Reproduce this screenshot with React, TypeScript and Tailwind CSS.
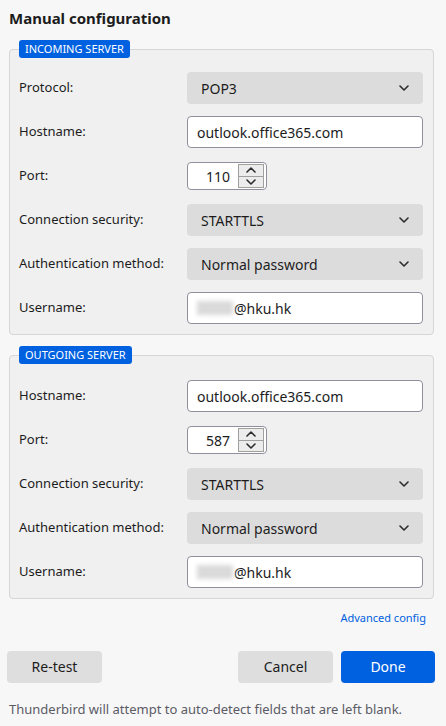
import React from 'react'

const font = { fontFamily: '"Noto Sans", "Open Sans", sans-serif' }

function Chevron({ up = false }: { up?: boolean }) {
  return (
    <svg width="10" height="6" viewBox="0 0 10 6" className={up ? 'rotate-180' : ''}>
      <polyline points="1,1 5,5 9,1" fill="none" stroke="#2b2b2b" strokeWidth="1.6" strokeLinecap="round" strokeLinejoin="round" />
    </svg>
  )
}

function Select({ value }: { value: string }) {
  return (
    <div className="h-8 w-full rounded-[4px] bg-[#dcdcdc] flex items-center justify-between pl-[14px] pr-[14px] text-[14px] text-[#1c1c1c]">
      <span>{value}</span>
      <Chevron />
    </div>
  )
}

function TextBox({ children }: { children: React.ReactNode }) {
  return (
    <div className="h-8 w-full rounded-[4px] border border-[#8f8f9d] bg-white flex items-center px-[9px] text-[14px] text-[#1c1c1c]">
      {children}
    </div>
  )
}

function Spinner({ value }: { value: string }) {
  return (
    <div className="h-7 w-20 rounded-[4px] border border-[#8f8f9d] bg-white flex items-center">
      <span className="flex-1 text-right pr-[8px] text-[14px] text-[#1c1c1c]">{value}</span>
      <div className="h-[24px] w-[26px] mr-[2px] flex flex-col border border-[#a0a0a0]">
        <div className="flex-1 bg-[#ececec] border-b border-[#a0a0a0] flex items-center justify-center">
          <Chevron up />
        </div>
        <div className="flex-1 bg-[#ececec] flex items-center justify-center">
          <Chevron />
        </div>
      </div>
    </div>
  )
}

function Username() {
  return (
    <TextBox>
      <span className="inline-block h-[14px] w-[36px] bg-[#dadada] blur-[2px] mr-[1px]" />
      <span>@hku.hk</span>
    </TextBox>
  )
}

function Row({ label, children }: { label: string; children: React.ReactNode }) {
  return (
    <div className="flex items-center h-8">
      <div className="w-[168px] text-[13px] text-[#1c1c1c]">{label}</div>
      <div className="flex-1 flex items-center">{children}</div>
    </div>
  )
}

function Section({ title, top, children }: { title: string; top: string; children: React.ReactNode }) {
  return (
    <fieldset className={`ml-[9px] mr-[12px] rounded-[4px] border border-[#d6d6d6] bg-[#f0f0f0] pl-[9px] pr-[10px] pb-[10px] ${top}`}>
      <legend className="rounded-[3px] bg-[#0061e0] px-[6px] h-[18px] leading-[18px] text-[11px] text-white">
        {title}
      </legend>
      <div className="flex flex-col gap-3">{children}</div>
    </fieldset>
  )
}

export default function App() {
  return (
    <div className="w-[446px] h-[726px] bg-[#f7f7f7] overflow-hidden" style={font}>
      <h1 className="pl-[9px] pt-[8px] text-[15px] font-bold text-[#1c1c1c] leading-5">Manual configuration</h1>

      <div className="mt-[12px]">
        <Section title="INCOMING SERVER" top="pt-[14px]">
          <Row label="Protocol:"><Select value="POP3" /></Row>
          <Row label="Hostname:"><TextBox>outlook.office365.com</TextBox></Row>
          <Row label="Port:"><Spinner value="110" /></Row>
          <Row label="Connection security:"><Select value="STARTTLS" /></Row>
          <Row label="Authentication method:"><Select value="Normal password" /></Row>
          <Row label="Username:"><Username /></Row>
        </Section>
      </div>

      <div className="mt-[11px]">
        <Section title="OUTGOING SERVER" top="pt-[16px]">
          <Row label="Hostname:"><TextBox>outlook.office365.com</TextBox></Row>
          <Row label="Port:"><Spinner value="587" /></Row>
          <Row label="Connection security:"><Select value="STARTTLS" /></Row>
          <Row label="Authentication method:"><Select value="Normal password" /></Row>
          <Row label="Username:"><Username /></Row>
        </Section>
      </div>

      <div className="flex justify-end pr-[20px] pt-[11px]">
        <span className="text-[11px] text-[#0061e0]">Advanced config</span>
      </div>

      <div className="flex items-center pl-[7px] pr-[11px] pt-[24px]">
        <button className="h-8 w-[95px] rounded-[4px] bg-[#dedede] text-[14px] text-[#1c1c1c]">Re-test</button>
        <div className="flex-1" />
        <button className="h-8 w-[95px] rounded-[4px] bg-[#dedede] text-[14px] text-[#1c1c1c]">Cancel</button>
        <button className="ml-[8px] h-8 w-[94px] rounded-[4px] bg-[#0061e0] text-[14px] text-white">Done</button>
      </div>

      <p className="pl-[9px] pt-[17px] text-[13px] text-[#5b5b66]">
        Thunderbird will attempt to auto-detect fields that are left blank.
      </p>
    </div>
  )
}
